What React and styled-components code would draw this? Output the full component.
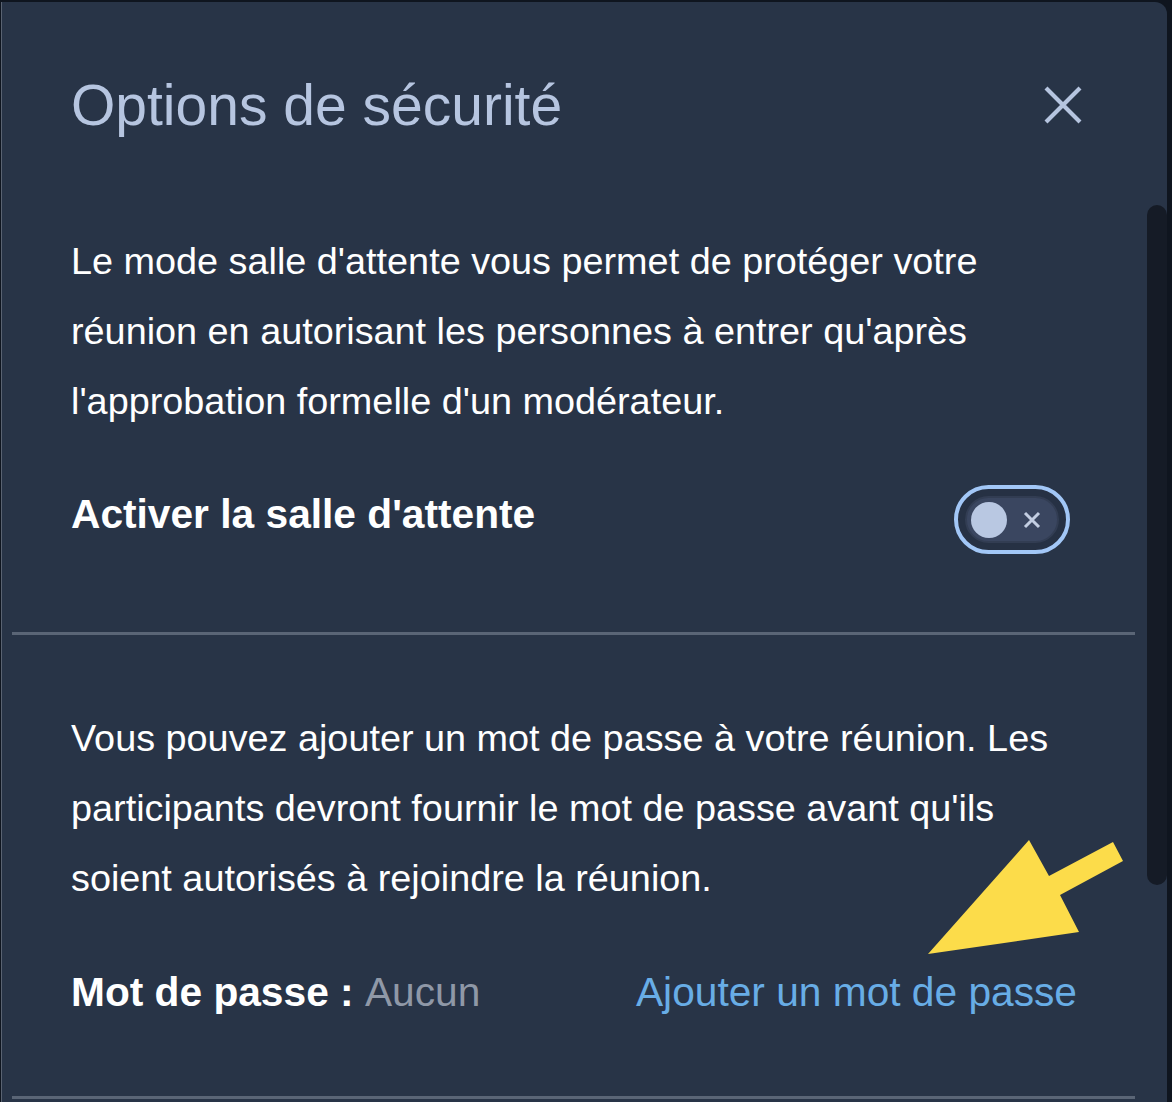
import React from "react";
import styled, { createGlobalStyle } from "styled-components";

const Global = createGlobalStyle`
  html, body { margin: 0; padding: 0; background: #0f151f; }
  body { font-family: "Liberation Sans", Arial, sans-serif; }
  * { box-sizing: border-box; }
`;

const Page = styled.div`
  width: 1172px;
  height: 1102px;
  overflow: hidden;
  background: #0f151f;
  padding-top: 2px;
`;

const Panel = styled.div`
  position: relative;
  margin-left: 1px;
  width: 1166px;
  height: 1100px;
  background: #283447;
  border-left: 1px solid #5a6372;
  border-top-right-radius: 12px;
  display: flex;
  flex-direction: column;
`;

const Header = styled.div`
  height: 206px;
  display: flex;
  align-items: center;
  justify-content: space-between;
  padding: 0 84px 0 69px;
`;

const Title = styled.h1`
  margin: 0;
  font-size: 57px;
  font-weight: 400;
  color: #b6c5e0;
  letter-spacing: 0;
`;

const CloseButton = styled.button`
  border: 0;
  background: transparent;
  padding: 0;
  width: 40px;
  height: 40px;
  display: flex;
  align-items: center;
  justify-content: center;
  cursor: pointer;
`;

const Body = styled.div`
  padding: 0 32px 0 10px;
  display: flex;
  flex-direction: column;
`;

const Section = styled.section`
  padding: ${(p) => p.$top}px 62px 0 59px;
`;

const Paragraph = styled.p`
  margin: 0;
  font-size: 37.8px;
  line-height: 70px;
  color: #ffffff;
`;

const Row = styled.div`
  margin-top: ${(p) => p.$top}px;
  display: flex;
  align-items: ${(p) => p.$align || "center"};
  justify-content: space-between;
`;

const Label = styled.span`
  font-size: 40.7px;
  line-height: 58px;
  font-weight: 700;
  color: #ffffff;
`;

const Muted = styled.span`
  font-weight: 400;
  color: #8f98a7;
`;

const LinkButton = styled.a`
  font-size: 40.7px;
  line-height: 58px;
  color: #68ade6;
  text-decoration: none;
  margin-right: -4px;
  cursor: pointer;
`;

const ToggleRing = styled.div`
  width: 116px;
  height: 69px;
  border: 4px solid #a2c7f7;
  border-radius: 40px;
  padding: 7px;
  margin-right: 3px;
  background: #263144;
  display: flex;
`;

const ToggleTrack = styled.div`
  flex: 1;
  border-radius: 30px;
  background: #3a4660;
  border: 2px solid #323d53;
  display: flex;
  align-items: center;
  justify-content: space-between;
  padding: 0 15px 0 4px;
`;

const Knob = styled.span`
  width: 36px;
  height: 36px;
  border-radius: 50%;
  background: #b9c8e2;
`;

const Divider = styled.hr`
  margin: ${(p) => p.$top}px 0 0 0;
  border: 0;
  height: 3px;
  background: #5a6576;
`;

const ScrollThumb = styled.div`
  position: absolute;
  top: 203px;
  right: 0;
  width: 20px;
  height: 680px;
  border-radius: 10px;
  background: #151b26;
`;

const Annotation = styled.svg`
  position: absolute;
  left: 0;
  top: 0;
  pointer-events: none;
`;

export default function App() {
  return (
    <>
      <Global />
      <Page>
        <Panel>
          <Header>
            <Title>Options de sécurité</Title>
            <CloseButton aria-label="Fermer">
              <svg width="40" height="40" viewBox="0 0 40 40">
                <path d="M3 3 L37 37 M37 3 L3 37" stroke="#b6c5e0" strokeWidth="4.2" />
              </svg>
            </CloseButton>
          </Header>
          <Body>
            <Section $top={18}>
              <Paragraph>
                Le mode salle d'attente vous permet de protéger votre réunion en
                autorisant les personnes à entrer qu'après l'approbation formelle
                d'un modérateur.
              </Paragraph>
              <Row $top={49} $align="flex-start">
                <Label>Activer la salle d'attente</Label>
                <ToggleRing>
                  <ToggleTrack>
                    <Knob />
                    <svg width="20" height="20" viewBox="0 0 20 20">
                      <path d="M3 3 L17 17 M17 3 L3 17" stroke="#c3cee2" strokeWidth="3" />
                    </svg>
                  </ToggleTrack>
                </ToggleRing>
              </Row>
            </Section>
            <Divider $top={78} />
            <Section $top={68}>
              <Paragraph>
                Vous pouvez ajouter un mot de passe à votre réunion. Les
                participants devront fournir le mot de passe avant qu'ils soient
                autorisés à rejoindre la réunion.
              </Paragraph>
              <Row $top={50}>
                <Label>
                  Mot de passe : <Muted>Aucun</Muted>
                </Label>
                <LinkButton>Ajouter un mot de passe</LinkButton>
              </Row>
            </Section>
            <Divider $top={75} />
          </Body>
          <ScrollThumb />
        </Panel>
        <Annotation width="1172" height="1102" viewBox="0 0 1172 1102">
          <polygon
            points="1113,842 1123,861 1060,895 1079,932 928,954 1029,840 1049,876"
            fill="#fcdc4a"
          />
        </Annotation>
      </Page>
    </>
  );
}
